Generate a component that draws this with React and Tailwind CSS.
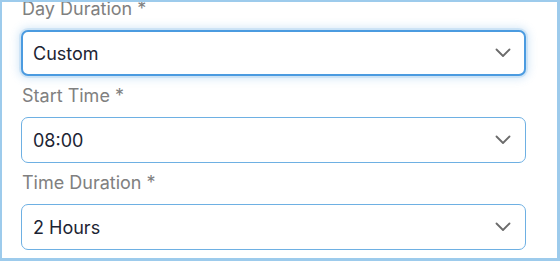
const fields = [
  { label: "Day Duration *", value: "Custom", focused: true },
  { label: "Start Time *", value: "08:00" },
  { label: "Time Duration *", value: "2 Hours" },
];

const Chevron = () => (
  <svg width="16" height="10" viewBox="0 0 16 10" fill="none" className="text-[#6b6b6b]">
    <path d="M1.5 1.5 L8 8 L14.5 1.5" stroke="currentColor" strokeWidth="1.8" strokeLinecap="round" strokeLinejoin="round" />
  </svg>
);

const Field = ({ label, value, focused }) => (
  <div className="flex flex-col">
    <label className="text-[18px] leading-6 text-[#808080] pl-[1px] mb-[9px]">{label}</label>
    <div
      className={
        focused
          ? "flex items-center justify-between h-[46px] w-[505px] rounded-[7px] border-2 border-[#4b9be0] pl-[10px] pr-[13px] shadow-[0_0_0_2px_rgba(75,155,224,0.15),0_0_8px_3px_rgba(75,155,224,0.22)] bg-white"
          : "flex items-center justify-between h-[46px] w-[505px] rounded-[7px] border border-[#6eb0e3] pl-[10px] pr-[14px] bg-white"
      }
    >
      <span className={focused ? "text-[18px] text-[#1c2433]" : "text-[18px] text-[#1c2433] pl-[1px]"}>{value}</span>
      <Chevron />
    </div>
  </div>
);

export default function App() {
  return (
    <div
      className="w-[560px] h-[261px] overflow-hidden bg-white border-2 border-r-[3px] border-b-[3px] border-[#9dcbec]"
      style={{ fontFamily: "Inter, 'Noto Sans', sans-serif" }}
    >
      <div className="-mt-[5px] pl-[19px] flex flex-col gap-[8px]">
        {fields.map((f) => (
          <Field key={f.label} {...f} />
        ))}
      </div>
    </div>
  );
}
